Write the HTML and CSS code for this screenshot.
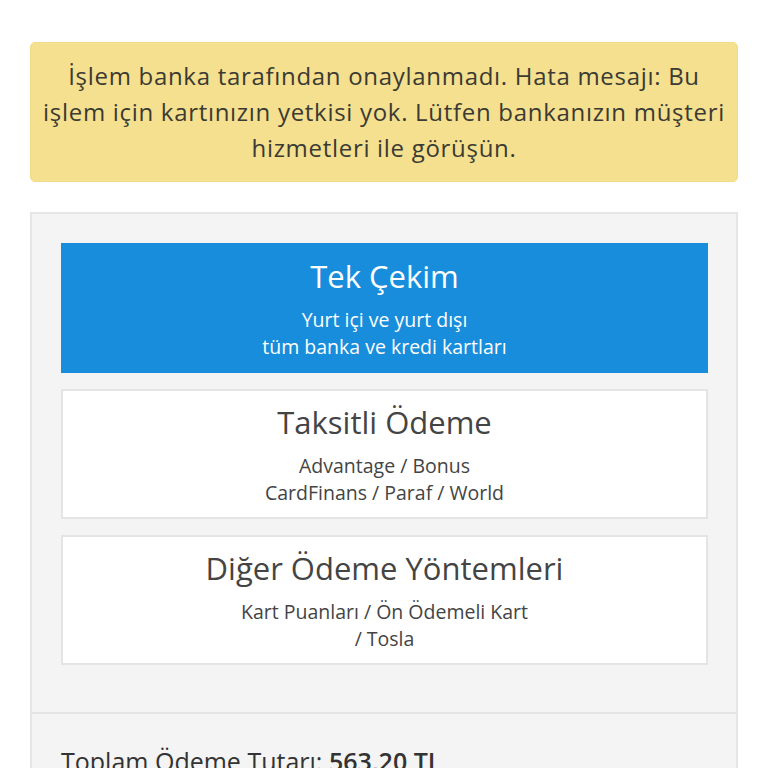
FILE: index.html
```html
<!DOCTYPE html>
<html lang="tr">
<head>
<meta charset="utf-8">
<link rel="stylesheet" href="styles.css">
</head>
<body>
<div class="page">
  <div class="alert">İşlem banka tarafından onaylanmadı. Hata mesajı: Bu işlem için kartınızın yetkisi yok. Lütfen bankanızın müşteri hizmetleri ile görüşün.</div>
  <div class="panel">
    <div class="panel-body">
      <div class="option active">
        <div class="title">Tek Çekim</div>
        <div class="sub">Yurt içi ve yurt dışı<br>tüm banka ve kredi kartları</div>
      </div>
      <div class="option">
        <div class="title">Taksitli Ödeme</div>
        <div class="sub">Advantage / Bonus<br>CardFinans / Paraf / World</div>
      </div>
      <div class="option">
        <div class="title">Diğer Ödeme Yöntemleri</div>
        <div class="sub">Kart Puanları / Ön Ödemeli Kart<br>/ Tosla</div>
      </div>
    </div>
    <div class="panel-footer">Toplam Ödeme Tutarı: <b>563,20 TL</b></div>
  </div>
</div>
</body>
</html>
```
FILE: styles.css
```css
html, body {
  margin: 0;
  padding: 0;
  background: #fff;
  font-family: "Open Sans", "Noto Sans", sans-serif;
  color: #444;
}
.page {
  padding: 42px 30px 0 30px;
}
.alert {
  background: #f4e08f;
  border: 1px solid #f1dc8a;
  border-radius: 5px;
  padding: 15px 8px;
  font-size: 24px;
  line-height: 36px;
  letter-spacing: 0.7px;
  text-align: center;
  color: #3b3a33;
}
.panel {
  margin-top: 30px;
  background: #f4f4f4;
  border: 2px solid #e6e6e6;
  border-bottom: none;
}
.panel-body {
  padding: 29px 28px 31px 29px;
}
.option {
  background: #fff;
  border: 2px solid #e4e4e4;
  height: 130px;
  box-sizing: border-box;
  margin-bottom: 16px;
  text-align: center;
  color: #444;
  padding-top: 11px;
}
.option.active {
  background: #178ddc;
  border-color: #178ddc;
  color: #fff;
}
.title {
  font-size: 31px;
  line-height: 40px;
}
.sub {
  margin-top: 10px;
  font-size: 19.5px;
  line-height: 27px;
}
.panel-footer {
  border-top: 2px solid #e4e4e4;
  padding: 30px 29px;
  font-size: 25px;
  line-height: 34px;
  color: #333;
}
.panel-footer b {
  font-weight: 600;
}
```
